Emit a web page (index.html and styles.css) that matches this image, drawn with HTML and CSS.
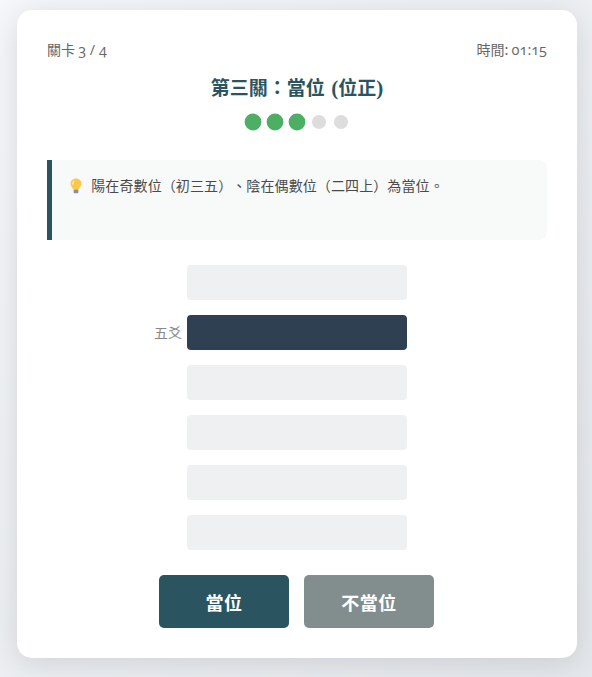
FILE: index.html
```html
<!DOCTYPE html>
<html lang="zh-Hant">
<head>
<meta charset="UTF-8">
<meta name="viewport" content="width=device-width, initial-scale=1.0">
<title>當位</title>
<link rel="stylesheet" href="styles.css">
</head>
<body>

<div class="card">
    <div class="top">
        <span>關卡 <span class="num">3 / 4</span></span>
        <span>時間: <span class="num">01:15</span></span>
    </div>

    <h2>第三關：當位 <span class="paren">(</span>位正<span class="paren">)</span></h2>

    <div class="dots">
        <span class="dot done"></span>
        <span class="dot done"></span>
        <span class="dot done"></span>
        <span class="dot"></span>
        <span class="dot"></span>
    </div>

    <div class="hint">
        <svg class="bulb" viewBox="0 0 14 16" width="14" height="16">
            <path d="M7 0.500C3.800 0.500 1.500 2.800 1.500 5.700C1.500 8 3.400 9.200 4.400 11.500H9.600C10.600 9.200 12.500 8 12.500 5.700C12.500 2.800 10.200 0.500 7 0.500Z" fill="#fbc84a"/>
            <path d="M5 3C3.900 3.900 3.600 5.300 4 6.700" stroke="#fff3c4" stroke-width="1.200" fill="none"/>
            <rect x="4.600" y="11.500" width="4.800" height="3.800" rx="1" fill="#8d8d9b"/>
        </svg>
        陽在奇數位（初三五）、陰在偶數位（二四上）為當位。
    </div>

    <div class="lines">
        <div class="line"></div>
        <div class="line active"><span class="label">五爻</span></div>
        <div class="line"></div>
        <div class="line"></div>
        <div class="line"></div>
        <div class="line"></div>
    </div>

    <div class="buttons">
        <button class="btn yes">當位</button>
        <button class="btn no">不當位</button>
    </div>
</div>

</body>
</html>
```

FILE: styles.css
```css
body {
    font-family: "Noto Sans CJK TC", sans-serif;
    text-spacing-trim: space-all;
    margin: 0;
    padding: 10px 15px 19px 17px;
    background: linear-gradient(135deg, #f5f7fa, #e4e7eb);
    min-height: 100vh;
    box-sizing: border-box;
}

.card {
    background: #fff;
    width: 560px;
    height: 648px;
    box-sizing: border-box;
    padding: 29px 30px 30px;
    border-radius: 15px;
    box-shadow: 0 5px 30px rgba(0,0,0,0.12);
}

.top {
    display: flex;
    justify-content: space-between;
    color: #666;
    font-size: 14px;
    line-height: 20px;
}

.num {
    font-family: "Open Sans", sans-serif;
    font-feature-settings: "onum";
    font-size: 14.500px;
}

h2 {
    margin: 13px 0 0;
    text-align: center;
    color: #2a5560;
    font-size: 19px;
    line-height: 27px;
    font-weight: 700;
    word-spacing: 2px;
}

.paren {
    font-family: "Liberation Serif", serif;
    font-size: 21px;
    line-height: 1;
}

.dots {
    display: flex;
    justify-content: center;
    align-items: center;
    gap: 8px;
    margin-top: 15px;
}

.dot {
    width: 14px;
    height: 14px;
    border-radius: 50%;
    background: #ddd;
}

.dot.done {
    background: #4caf64;
    transform: scale(1.2);
}

.hint {
    margin-top: 31px;
    height: 80px;
    box-sizing: border-box;
    padding: 14px 15px 15px 17px;
    background: #f8fafa;
    border-left: 5px solid #2a5560;
    border-radius: 0 8px 8px 0;
    color: #4a4a4a;
    font-size: 14px;
    line-height: 22px;
    letter-spacing: 0.100px;
}

.bulb {
    vertical-align: -3px;
    margin-right: 5px;
}

.lines {
    display: flex;
    flex-direction: column;
    align-items: center;
    gap: 15px;
    margin-top: 25px;
}

.line {
    position: relative;
    width: 220px;
    height: 35px;
    background: #eff0f2;
    border-radius: 4px;
}

.line.active {
    background: #2f4053;
}

.label {
    position: absolute;
    right: 100%;
    top: 7px;
    margin-right: 5px;
    white-space: nowrap;
    color: #888;
    font-size: 14px;
    line-height: 20px;
}

.buttons {
    display: flex;
    justify-content: center;
    gap: 15px;
    margin-top: 25px;
    padding-right: 1px;
}

.btn {
    width: 130px;
    height: 53px;
    border: none;
    border-radius: 5px;
    color: #fff;
    font-family: inherit;
    font-size: 18px;
    font-weight: 700;
    letter-spacing: 0.500px;
}

.yes { background: #2a5560; }
.no { background: #828e8d; }
```
